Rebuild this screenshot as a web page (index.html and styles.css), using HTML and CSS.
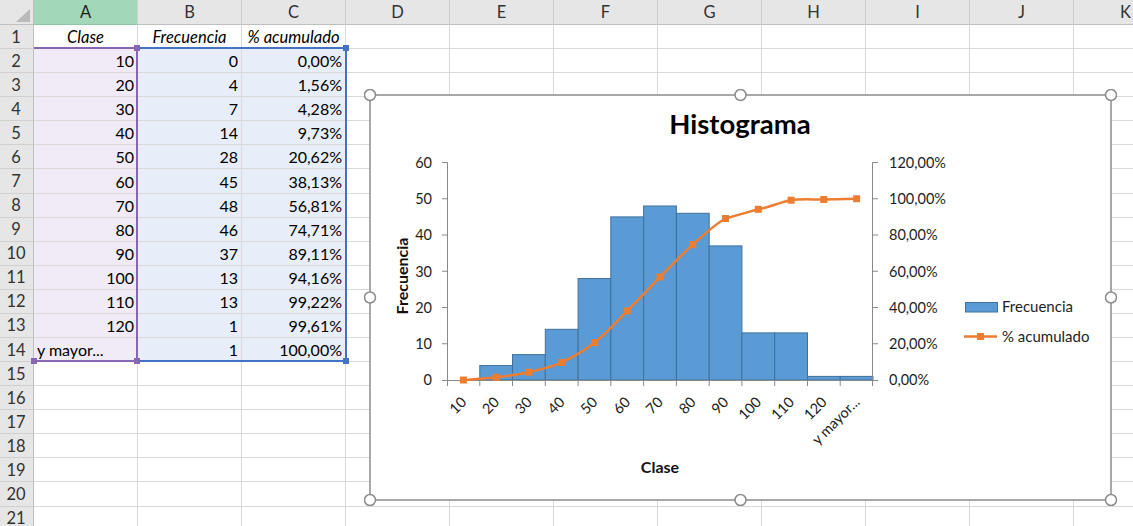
FILE: index.html
```html
<!DOCTYPE html>
<html lang="es">
<head>
    <meta charset="UTF-8">
    <title>Histograma</title>
    <link rel="stylesheet" href="styles.css">
</head>
<body>
    <div class="wrap">
        <div class="sheet">
            <!-- cabecera de columnas -->
            <div class="corner"><span class="tri"></span></div>
            <div class="ch sel">A</div><div class="ch">B</div><div class="ch">C</div><div class="ch">D</div><div class="ch">E</div><div class="ch">F</div>
            <div class="ch">G</div><div class="ch">H</div><div class="ch">I</div><div class="ch">J</div><div class="ch">K</div>

            <div class="rh">1</div><div class="c t">Clase</div><div class="c t">Frecuencia</div><div class="c t">% acumulado</div>
            <div class="c"></div><div class="c"></div><div class="c"></div><div class="c"></div><div class="c"></div><div class="c"></div><div class="c"></div><div class="c"></div>

            <div class="rh">2</div><div class="c n pa">10</div><div class="c n pb">0</div><div class="c n pb">0,00%</div>
            <div class="c"></div><div class="c"></div><div class="c"></div><div class="c"></div><div class="c"></div><div class="c"></div><div class="c"></div><div class="c"></div>
            <div class="rh">3</div><div class="c n pa">20</div><div class="c n pb">4</div><div class="c n pb">1,56%</div>
            <div class="c"></div><div class="c"></div><div class="c"></div><div class="c"></div><div class="c"></div><div class="c"></div><div class="c"></div><div class="c"></div>
            <div class="rh">4</div><div class="c n pa">30</div><div class="c n pb">7</div><div class="c n pb">4,28%</div>
            <div class="c"></div><div class="c"></div><div class="c"></div><div class="c"></div><div class="c"></div><div class="c"></div><div class="c"></div><div class="c"></div>
            <div class="rh">5</div><div class="c n pa">40</div><div class="c n pb">14</div><div class="c n pb">9,73%</div>
            <div class="c"></div><div class="c"></div><div class="c"></div><div class="c"></div><div class="c"></div><div class="c"></div><div class="c"></div><div class="c"></div>
            <div class="rh">6</div><div class="c n pa">50</div><div class="c n pb">28</div><div class="c n pb">20,62%</div>
            <div class="c"></div><div class="c"></div><div class="c"></div><div class="c"></div><div class="c"></div><div class="c"></div><div class="c"></div><div class="c"></div>
            <div class="rh">7</div><div class="c n pa">60</div><div class="c n pb">45</div><div class="c n pb">38,13%</div>
            <div class="c"></div><div class="c"></div><div class="c"></div><div class="c"></div><div class="c"></div><div class="c"></div><div class="c"></div><div class="c"></div>
            <div class="rh">8</div><div class="c n pa">70</div><div class="c n pb">48</div><div class="c n pb">56,81%</div>
            <div class="c"></div><div class="c"></div><div class="c"></div><div class="c"></div><div class="c"></div><div class="c"></div><div class="c"></div><div class="c"></div>
            <div class="rh">9</div><div class="c n pa">80</div><div class="c n pb">46</div><div class="c n pb">74,71%</div>
            <div class="c"></div><div class="c"></div><div class="c"></div><div class="c"></div><div class="c"></div><div class="c"></div><div class="c"></div><div class="c"></div>
            <div class="rh">10</div><div class="c n pa">90</div><div class="c n pb">37</div><div class="c n pb">89,11%</div>
            <div class="c"></div><div class="c"></div><div class="c"></div><div class="c"></div><div class="c"></div><div class="c"></div><div class="c"></div><div class="c"></div>
            <div class="rh">11</div><div class="c n pa">100</div><div class="c n pb">13</div><div class="c n pb">94,16%</div>
            <div class="c"></div><div class="c"></div><div class="c"></div><div class="c"></div><div class="c"></div><div class="c"></div><div class="c"></div><div class="c"></div>
            <div class="rh">12</div><div class="c n pa">110</div><div class="c n pb">13</div><div class="c n pb">99,22%</div>
            <div class="c"></div><div class="c"></div><div class="c"></div><div class="c"></div><div class="c"></div><div class="c"></div><div class="c"></div><div class="c"></div>
            <div class="rh">13</div><div class="c n pa">120</div><div class="c n pb">1</div><div class="c n pb">99,61%</div>
            <div class="c"></div><div class="c"></div><div class="c"></div><div class="c"></div><div class="c"></div><div class="c"></div><div class="c"></div><div class="c"></div>
            <div class="rh">14</div><div class="c pa">y mayor...</div><div class="c n pb">1</div><div class="c n pb">100,00%</div>
            <div class="c"></div><div class="c"></div><div class="c"></div><div class="c"></div><div class="c"></div><div class="c"></div><div class="c"></div><div class="c"></div>

            <div class="rh">15</div><div class="c"></div><div class="c"></div><div class="c"></div><div class="c"></div><div class="c"></div><div class="c"></div><div class="c"></div><div class="c"></div><div class="c"></div><div class="c"></div><div class="c"></div>
            <div class="rh">16</div><div class="c"></div><div class="c"></div><div class="c"></div><div class="c"></div><div class="c"></div><div class="c"></div><div class="c"></div><div class="c"></div><div class="c"></div><div class="c"></div><div class="c"></div>
            <div class="rh">17</div><div class="c"></div><div class="c"></div><div class="c"></div><div class="c"></div><div class="c"></div><div class="c"></div><div class="c"></div><div class="c"></div><div class="c"></div><div class="c"></div><div class="c"></div>
            <div class="rh">18</div><div class="c"></div><div class="c"></div><div class="c"></div><div class="c"></div><div class="c"></div><div class="c"></div><div class="c"></div><div class="c"></div><div class="c"></div><div class="c"></div><div class="c"></div>
            <div class="rh">19</div><div class="c"></div><div class="c"></div><div class="c"></div><div class="c"></div><div class="c"></div><div class="c"></div><div class="c"></div><div class="c"></div><div class="c"></div><div class="c"></div><div class="c"></div>
            <div class="rh">20</div><div class="c"></div><div class="c"></div><div class="c"></div><div class="c"></div><div class="c"></div><div class="c"></div><div class="c"></div><div class="c"></div><div class="c"></div><div class="c"></div><div class="c"></div>
            <div class="rh">21</div><div class="c"></div><div class="c"></div><div class="c"></div><div class="c"></div><div class="c"></div><div class="c"></div><div class="c"></div><div class="c"></div><div class="c"></div><div class="c"></div><div class="c"></div>
        </div>

        <!-- rangos resaltados del gráfico -->
        <div class="range range-a">
            <span class="hdl hdl-tr"></span><span class="hdl hdl-bl"></span><span class="hdl hdl-br"></span>
        </div>
        <div class="range range-b">
            <span class="hdl hdl-tr"></span><span class="hdl hdl-br"></span>
        </div>

        <!-- gráfico flotante -->
        <div class="chart">
            <svg width="753" height="417" viewBox="364 89 753 417" xmlns="http://www.w3.org/2000/svg">
                <rect x="370" y="95" width="741" height="405" fill="#fff" stroke="#8c8c8c" stroke-width="1.5"/>

                <text class="title" x="740" y="134" text-anchor="middle">Histograma</text>

                <!-- barras -->
                <g fill="#5b9bd5" stroke="#41719c" stroke-width="1">
                    <rect x="479.8" y="365.5" width="32.7" height="14.5"/>
                    <rect x="512.5" y="354.6" width="32.8" height="25.4"/>
                    <rect x="545.3" y="329.3" width="32.8" height="50.7"/>
                    <rect x="578.1" y="278.5" width="32.7" height="101.5"/>
                    <rect x="610.8" y="216.9" width="32.8" height="163.1"/>
                    <rect x="643.6" y="206" width="32.8" height="174"/>
                    <rect x="676.4" y="213.3" width="32.8" height="166.7"/>
                    <rect x="709.2" y="245.9" width="32.7" height="134.1"/>
                    <rect x="741.9" y="332.9" width="32.8" height="47.1"/>
                    <rect x="774.7" y="332.9" width="32.8" height="47.1"/>
                    <rect x="807.5" y="376.4" width="32.7" height="3.6"/>
                    <rect x="840.2" y="376.4" width="32.8" height="3.6"/>
                </g>

                <!-- ejes -->
                <g stroke="#898989" stroke-width="1" fill="none">
                    <path d="M447.5 162.5V380.5M442 162.5H447.5M442 198.75H447.5M442 235H447.5M442 271.25H447.5M442 307.5H447.5M442 343.75H447.5M442 380.5H447.5"/>
                    <path d="M872.5 162.5V380.5M872.5 162.5H878M872.5 198.75H878M872.5 235H878M872.5 271.25H878M872.5 307.5H878M872.5 343.75H878M872.5 380.5H878"/>
                    <path d="M447 380.5H873M447.5 380V386M479.8 380V386M512.5 380V386M545.3 380V386M578.1 380V386M610.8 380V386M643.6 380V386M676.4 380V386M709.2 380V386M741.9 380V386M774.7 380V386M807.5 380V386M840.2 380V386M872.5 380V386"/>
                </g>

                <g class="lbl" text-anchor="end">
                    <text x="432" y="385">0</text>
                    <text x="432" y="349">10</text>
                    <text x="432" y="312.5">20</text>
                    <text x="432" y="276.5">30</text>
                    <text x="432" y="240">40</text>
                    <text x="432" y="204">50</text>
                    <text x="432" y="167.5">60</text>
                </g>
                <g class="lbl">
                    <text x="889" y="385">0,00%</text>
                    <text x="889" y="349">20,00%</text>
                    <text x="889" y="312.5">40,00%</text>
                    <text x="889" y="276.5">60,00%</text>
                    <text x="889" y="240">80,00%</text>
                    <text x="889" y="204">100,00%</text>
                    <text x="889" y="167.5">120,00%</text>
                </g>
                <g class="lbl" text-anchor="end">
                    <text transform="translate(467.4 403) rotate(-45)">10</text>
                    <text transform="translate(500.2 403) rotate(-45)">20</text>
                    <text transform="translate(532.9 403) rotate(-45)">30</text>
                    <text transform="translate(565.7 403) rotate(-45)">40</text>
                    <text transform="translate(598.5 403) rotate(-45)">50</text>
                    <text transform="translate(631.2 403) rotate(-45)">60</text>
                    <text transform="translate(664 403) rotate(-45)">70</text>
                    <text transform="translate(696.8 403) rotate(-45)">80</text>
                    <text transform="translate(729.5 403) rotate(-45)">90</text>
                    <text transform="translate(762.3 403) rotate(-45)">100</text>
                    <text transform="translate(795.1 403) rotate(-45)">110</text>
                    <text transform="translate(827.8 403) rotate(-45)">120</text>
                    <text transform="translate(860.6 403) rotate(-45)">y mayor...</text>
                </g>

                <text class="axis-title" x="660" y="473" text-anchor="middle">Clase</text>
                <text class="axis-title" transform="translate(408 276) rotate(-90)" text-anchor="middle">Frecuencia</text>

                <!-- % acumulado -->
                <path fill="none" stroke="#ed7d31" stroke-width="2.5" stroke-linejoin="round"
                      d="M463.4 380C468.9 379.5 485.3 378.5 496.2 377.2C507.1 375.9 518 374.7 528.9 372.2C539.8 369.7 550.8 367.3 561.7 362.4C572.6 357.5 583.6 351.2 594.5 342.6C605.4 334 616.3 321.8 627.2 310.9C638.1 300 649.1 288.1 660 277C670.9 266 681.9 254.4 692.8 244.6C703.7 234.9 714.6 224.4 725.5 218.5C736.4 215.4 747.4 212.4 758.3 209.3C769.2 207.7 780.2 201.8 791.1 200.2C802 198.6 812.9 199.7 823.8 199.5C834.7 199.3 851.1 198.9 856.6 198.75"/>
                <g fill="#ed7d31">
                    <rect x="459.9" y="376.5" width="7" height="7"/>
                    <rect x="492.7" y="373.7" width="7" height="7"/>
                    <rect x="525.4" y="368.7" width="7" height="7"/>
                    <rect x="558.2" y="358.9" width="7" height="7"/>
                    <rect x="591" y="339.1" width="7" height="7"/>
                    <rect x="623.7" y="307.4" width="7" height="7"/>
                    <rect x="656.5" y="273.5" width="7" height="7"/>
                    <rect x="689.3" y="241.1" width="7" height="7"/>
                    <rect x="722" y="215" width="7" height="7"/>
                    <rect x="754.8" y="205.8" width="7" height="7"/>
                    <rect x="787.6" y="196.7" width="7" height="7"/>
                    <rect x="820.3" y="196" width="7" height="7"/>
                    <rect x="853.1" y="195.25" width="7" height="7"/>
                </g>

                <!-- leyenda -->
                <rect x="965.5" y="302.5" width="32" height="9.5" fill="#5b9bd5" stroke="#41719c" stroke-width="1"/>
                <text class="lbl legend" x="1002" y="312">Frecuencia</text>
                <path d="M964 336.5H997" stroke="#ed7d31" stroke-width="2.5"/>
                <rect x="977" y="333" width="7" height="7" fill="#ed7d31"/>
                <text class="lbl legend" x="1002" y="341.5">% acumulado</text>

                <!-- controladores -->
                <g fill="#fff" stroke="#8c8c8c" stroke-width="1.5">
                    <circle cx="370" cy="95" r="5.5"/>
                    <circle cx="740.5" cy="95" r="5.5"/>
                    <circle cx="1111" cy="95" r="5.5"/>
                    <circle cx="370" cy="297.5" r="5.5"/>
                    <circle cx="1111" cy="297.5" r="5.5"/>
                    <circle cx="370" cy="500" r="5.5"/>
                    <circle cx="740.5" cy="500" r="5.5"/>
                    <circle cx="1111" cy="500" r="5.5"/>
                </g>
            </svg>
        </div>
    </div>
</body>
</html>
```
FILE: styles.css
```css
html, body {
    margin: 0;
    padding: 0;
    background: #fff;
    overflow: hidden;
}

.wrap {
    position: relative;
    width: 1133px;
    height: 526px;
    overflow: hidden;
    font-family: "Lato", "Liberation Sans", sans-serif;
}

.sheet {
    display: grid;
    grid-template-columns: 34px repeat(11, 104px);
    grid-template-rows: 25px;
    grid-auto-rows: 24.08px;
    font-size: 16px;
    color: #000;
}

/* celdas */
.c {
    box-sizing: border-box;
    border-right: 1px solid #d9d9d9;
    border-bottom: 1px solid #d9d9d9;
    padding: 0 3px;
    display: flex;
    align-items: center;
    white-space: nowrap;
    overflow: hidden;
}
.c.n {
    justify-content: flex-end;
}
.c.t {
    justify-content: center;
    font-style: italic;
    font-size: 16.5px;
}
.pa {
    background: #f0ebf6;
}
.pb {
    background: #e7eef9;
}

/* cabeceras */
.corner, .ch, .rh {
    box-sizing: border-box;
    background: #e6e6e6;
    color: #333;
    display: flex;
    align-items: center;
    justify-content: center;
    font-size: 16.5px;
}
.corner {
    position: relative;
    border-right: 1px solid #bfbfbf;
    border-bottom: 1px solid #bfbfbf;
}
.tri {
    position: absolute;
    right: 3px;
    bottom: 2px;
    width: 0;
    height: 0;
    border-left: 14px solid transparent;
    border-bottom: 13px solid #b9b9b9;
}
.ch {
    border-right: 1px solid #cfcfcf;
    border-bottom: 1px solid #bfbfbf;
}
.ch.sel {
    background: #a3d7b9;
    color: #1d1d1d;
    border-bottom-color: #8fc7a6;
}
.rh {
    border-right: 1px solid #bfbfbf;
    border-bottom: 1px solid #d0d0d0;
    padding-right: 1px;
}

/* rangos del gráfico */
.range {
    position: absolute;
    box-sizing: border-box;
    border: 2px solid;
    border-left: 0;
}
.range-a {
    left: 34px;
    top: 47px;
    width: 104px;
    height: 315px;
    border-color: #8767b5;
}
.range-b {
    left: 139px;
    top: 47px;
    width: 208px;
    height: 315px;
    border-color: #4472c4;
}
.hdl {
    position: absolute;
    width: 6px;
    height: 6px;
}
.range-a .hdl {
    background: #8767b5;
}
.range-b .hdl {
    background: #4472c4;
}
.hdl-tr {
    right: -4px;
    top: -4px;
}
.hdl-br {
    right: -4px;
    bottom: -4px;
}
.hdl-bl {
    left: -3px;
    bottom: -4px;
}

/* gráfico */
.chart {
    position: absolute;
    left: 364px;
    top: 89px;
    width: 753px;
    height: 417px;
}
.chart svg {
    display: block;
    font-family: "Lato", "Liberation Sans", sans-serif;
}
.title {
    font-size: 27.5px;
    font-weight: bold;
    fill: #000;
}
.lbl {
    font-size: 14.5px;
    fill: #1e1e1e;
}
.legend {
    font-size: 15px;
}
.axis-title {
    font-size: 16px;
    font-weight: bold;
    fill: #111;
}
```
